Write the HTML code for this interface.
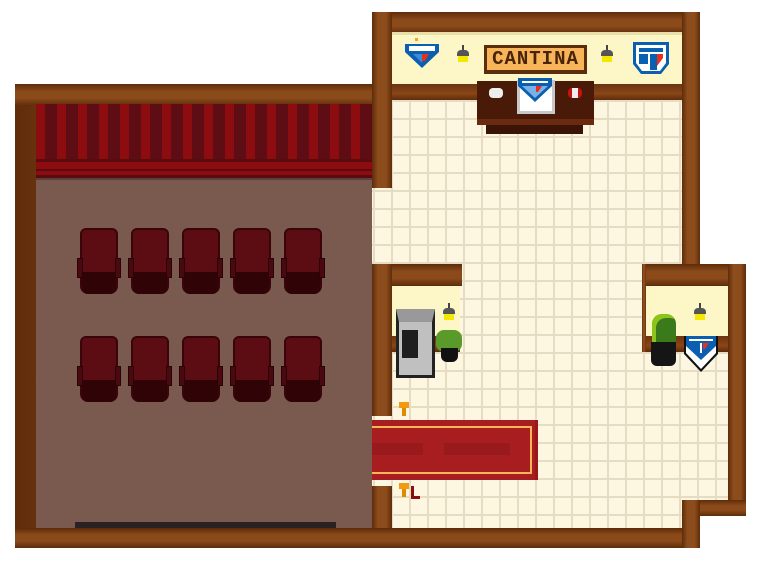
<!DOCTYPE html>
<html><head><meta charset="utf-8"><style>
*{margin:0;padding:0;box-sizing:border-box}
body{width:768px;height:576px;background:#fff;position:relative;overflow:hidden;font-family:"Liberation Mono",monospace}
div{position:absolute}
.w{background:linear-gradient(90deg,#5e2c0a,#8d4c1c 30%,#8d4c1c 70%,#5e2c0a);}
.wh{background:linear-gradient(180deg,#5e2c0a,#8b4a1a 35%,#8b4a1a 65%,#5e2c0a);}
.tile{background-color:#fdf6e0;background-image:linear-gradient(90deg,#e6dcc4 2px,transparent 2px),linear-gradient(180deg,#e6dcc4 2px,transparent 2px);background-size:18px 18px}
.cream{background:#fdf7c8}
.strip{background:linear-gradient(180deg,#6b3410,#8a4618 60%,#5e2c0c)}
.chair{width:44px;height:68px}
.chair .b{left:3px;top:0;width:38px;height:66px;background:#5c0d14;border:2px solid #3a050a;border-radius:6px 6px 8px 8px}
.chair .s{left:5px;top:44px;width:34px;height:22px;background:#300407;border-radius:0 0 6px 6px}
.chair .a1,.chair .a2{top:30px;width:6px;height:20px;background:#4a0910;border:1px solid #2a0306}
.chair .a1{left:0}.chair .a2{right:0}
.lamp{width:16px;height:22px}
.lamp .c{left:7px;top:0;width:2px;height:6px;background:#444}
.lamp .h{left:2px;top:5px;width:12px;height:6px;background:#555;border-radius:4px 4px 0 0}
.lamp .l{left:3px;top:11px;width:10px;height:6px;background:#f4e800}
</style></head><body>
<div class="w" style="left:15px;top:84px;width:377px;height:464px"></div>
<div class="wh" style="left:15px;top:84px;width:377px;height:22px"></div>
<div style="left:36px;top:104px;width:336px;height:56px;background:repeating-linear-gradient(90deg,#8c0c10 0 9px,#5e0d14 9px 21px)"></div>
<div style="left:36px;top:159px;width:336px;height:19px;background:linear-gradient(180deg,#5a0b10 0 3px,#8c0c10 3px 10px,#5a0b10 10px 12px,#8c0c10 12px 16px,#5a0b10 16px)"></div>
<div style="left:36px;top:178px;width:336px;height:350px;background:#7a5a4e;border-top:2px solid #5a4038"></div>
<div style="left:75px;top:522px;width:261px;height:6px;background:#2a2222"></div>
<div class="wh" style="left:15px;top:528px;width:377px;height:20px"></div>

<div class="chair" style="left:77px;top:228px"><div class="b"></div><div class="s"></div><div class="a1"></div><div class="a2"></div></div>
<div class="chair" style="left:128px;top:228px"><div class="b"></div><div class="s"></div><div class="a1"></div><div class="a2"></div></div>
<div class="chair" style="left:179px;top:228px"><div class="b"></div><div class="s"></div><div class="a1"></div><div class="a2"></div></div>
<div class="chair" style="left:230px;top:228px"><div class="b"></div><div class="s"></div><div class="a1"></div><div class="a2"></div></div>
<div class="chair" style="left:281px;top:228px"><div class="b"></div><div class="s"></div><div class="a1"></div><div class="a2"></div></div>
<div class="chair" style="left:77px;top:336px"><div class="b"></div><div class="s"></div><div class="a1"></div><div class="a2"></div></div>
<div class="chair" style="left:128px;top:336px"><div class="b"></div><div class="s"></div><div class="a1"></div><div class="a2"></div></div>
<div class="chair" style="left:179px;top:336px"><div class="b"></div><div class="s"></div><div class="a1"></div><div class="a2"></div></div>
<div class="chair" style="left:230px;top:336px"><div class="b"></div><div class="s"></div><div class="a1"></div><div class="a2"></div></div>
<div class="chair" style="left:281px;top:336px"><div class="b"></div><div class="s"></div><div class="a1"></div><div class="a2"></div></div>

<div class="tile" style="left:372px;top:100px;width:310px;height:428px;background-position:1px 0px"></div>
<div class="tile" style="left:660px;top:284px;width:68px;height:216px;background-position:1px 14px"></div>

<div class="wh" style="left:372px;top:12px;width:328px;height:22px"></div>
<div class="w" style="left:372px;top:12px;width:20px;height:176px"></div>
<div class="w" style="left:682px;top:12px;width:18px;height:254px"></div>
<div class="cream" style="left:392px;top:32px;width:290px;height:52px;border-top:3px solid #e8dfa8"></div>
<div class="strip" style="left:392px;top:84px;width:290px;height:16px"></div>

<div style="left:484px;top:45px;width:103px;height:29px;background:#f7b458;border:3px solid #5a2e0c;border-bottom-width:4px;color:#4a2408;font-weight:bold;font-size:19px;line-height:22px;text-align:center;letter-spacing:1px">CANTINA</div>
<div class="lamp" style="left:455px;top:45px"><div class="c"></div><div class="h"></div><div class="l"></div></div>
<div class="lamp" style="left:599px;top:45px"><div class="c"></div><div class="h"></div><div class="l"></div></div>
<svg style="position:absolute;left:405px;top:38px" width="34" height="34"><rect x="10" y="0" width="3" height="3" fill="#f7a030"/><path d="M0 6h34v8l-17 16L0 14z" fill="#0a5fb0"/><rect x="4" y="8" width="26" height="5" fill="#fff"/><path d="M17 16h7l-4 7h-3z" fill="#e8301c"/><path d="M8 16h9v9z" fill="#3a8ad8"/></svg>
<svg style="position:absolute;left:633px;top:42px" width="36" height="36"><path d="M0 0h36v22l-8 10H8L0 22z" fill="#0a5fb0"/><path d="M3 3h30v18l-6 8H9l-6-8z" fill="#fff"/><rect x="6" y="6" width="24" height="4" fill="#0a5fb0"/><rect x="6" y="12" width="9" height="10" fill="#0a5fb0"/><rect x="17" y="12" width="7" height="16" fill="#0a5fb0"/><path d="M24 12h6v4l-6 8z" fill="#e8301c"/></svg>
<div style="left:477px;top:81px;width:117px;height:44px;background:#4a1a08;border-bottom:6px solid #6a2a10"></div>
<div style="left:486px;top:125px;width:97px;height:9px;background:#3a1406"></div>
<div style="left:517px;top:80px;width:38px;height:34px;background:#fff;border:3px solid #c8c8c8"></div>
<svg style="position:absolute;left:518px;top:78px" width="36" height="24"><path d="M0 0h34v8L17 24 0 8z" fill="#0a5fb0"/><rect x="4" y="3" width="26" height="2" fill="#fff"/><path d="M4 8h26L17 20z" fill="#7ab0e8"/><path d="M18 8h6l-4 6h-2z" fill="#e8301c"/></svg>
<div style="left:489px;top:88px;width:14px;height:10px;background:#eee;border-radius:4px"></div>
<div style="left:568px;top:88px;width:14px;height:10px;background:#eee;border-radius:4px;border-left:4px solid #c81010;border-right:4px solid #c81010"></div>

<div class="wh" style="left:372px;top:264px;width:90px;height:22px"></div>
<div class="w" style="left:372px;top:264px;width:20px;height:152px"></div>
<div class="cream" style="left:392px;top:286px;width:68px;height:52px"></div>
<div class="strip" style="left:392px;top:336px;width:68px;height:16px"></div>
<div class="lamp" style="left:441px;top:303px"><div class="c"></div><div class="h"></div><div class="l"></div></div>
<div style="left:396px;top:309px;width:39px;height:69px;background:#c0c0c0;border:3px solid #222;border-top:13px solid #999"></div>
<div style="left:402px;top:330px;width:16px;height:28px;background:#1e1e1e"></div>
<div style="left:436px;top:330px;width:26px;height:22px;background:#5a9a2a;border-radius:8px"></div>
<div style="left:441px;top:348px;width:17px;height:14px;background:#111;border-radius:0 0 6px 6px"></div>

<div class="wh" style="left:642px;top:264px;width:104px;height:22px"></div>
<div class="w" style="left:642px;top:264px;width:4px;height:88px"></div>
<div class="w" style="left:728px;top:264px;width:18px;height:252px"></div>
<div class="cream" style="left:646px;top:286px;width:82px;height:52px"></div>
<div class="strip" style="left:646px;top:336px;width:82px;height:16px"></div>
<div class="lamp" style="left:692px;top:303px"><div class="c"></div><div class="h"></div><div class="l"></div></div>
<div style="left:652px;top:314px;width:24px;height:34px;background:#3a7a1a;border-radius:10px 10px 4px 4px;box-shadow:inset 4px 4px #8cc41c"></div>
<div style="left:651px;top:342px;width:25px;height:24px;background:#151515;border-radius:0 0 6px 6px"></div>
<svg style="position:absolute;left:684px;top:336px" width="34" height="36"><path d="M0 0h34v18L17 36 0 18z" fill="#111"/><path d="M2 0h30v17L17 33 2 17z" fill="#fff"/><path d="M2 0h30v10L17 24 2 10z" fill="#0a5fb0"/><rect x="5" y="3" width="24" height="2" fill="#fff"/><path d="M19 7h6l-4 6h-2z" fill="#e8301c"/><path d="M16 7h2v10h-2z" fill="#fff"/></svg>

<div style="left:372px;top:420px;width:166px;height:60px;background:#a81e20;border-right:3px solid #9a1618"></div>
<div style="left:372px;top:426px;width:160px;height:48px;border:2px solid #f7b458;border-left:none;background:#a81e20"></div>
<div style="left:372px;top:443px;width:51px;height:12px;background:#981a1c"></div>
<div style="left:444px;top:443px;width:66px;height:12px;background:#981a1c"></div>
<div style="left:399px;top:402px;width:10px;height:6px;background:#f29a10"></div>
<div style="left:402px;top:408px;width:4px;height:8px;background:#e08a00"></div>
<div style="left:399px;top:483px;width:10px;height:6px;background:#f29a10"></div>
<div style="left:402px;top:489px;width:4px;height:8px;background:#e08a00"></div>
<div style="left:411px;top:486px;width:3px;height:13px;background:#8a1010"></div>
<div style="left:411px;top:496px;width:9px;height:3px;background:#8a1010"></div>

<div class="w" style="left:372px;top:486px;width:20px;height:62px"></div>
<div class="wh" style="left:372px;top:528px;width:328px;height:20px"></div>
<div class="wh" style="left:682px;top:500px;width:64px;height:16px"></div>
<div class="w" style="left:682px;top:500px;width:18px;height:48px"></div>
</body></html>
